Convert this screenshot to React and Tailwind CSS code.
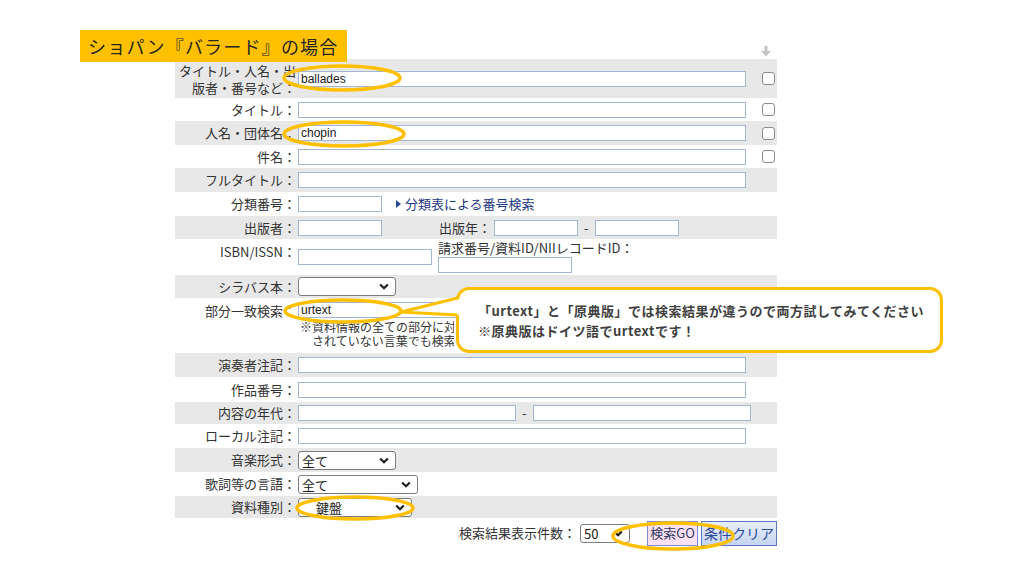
import React from 'react';

const Chevron = () => (
  <svg width="10" height="7" viewBox="0 0 10 7" className="shrink-0">
    <path d="M1.2 1.5 L5 5.2 L8.8 1.5" fill="none" stroke="#1f1f1f" strokeWidth="2.2" />
  </svg>
);

const Field = ({ className = '', value = '' }) => (
  <div
    className={`h-[16px] border border-[#a3b6cf] bg-white pl-[2px] text-[12px] leading-[14px] text-[#1a1a1a] font-['Liberation_Sans',sans-serif] ${className}`}
  >
    {value}
  </div>
);

const Select = ({ className = '', value = '', textClass = '' }) => (
  <div
    className={`h-[19px] border border-[#7c7c7c] rounded-[3px] bg-white flex items-center justify-between pl-[3px] pr-[6px] text-[13px] leading-none text-[#1a1a1a] ${className}`}
  >
    <span className={textClass}>{value}</span>
    <Chevron />
  </div>
);

const Check = () => <div className="w-[13px] h-[13px] border-[1.5px] border-[#8c8c8c] rounded-[3px] bg-white" />;

const Row = ({ gray, h, label, children, check, labelClass = '', align = 'items-center' }) => (
  <div className={`flex ${align} ${h} ${gray ? 'bg-[#e8e8e8]' : ''}`}>
    <div className={`w-[123px] shrink-0 pr-[2px] text-right text-[13px] text-[#333] ${labelClass}`}>{label}</div>
    <div className="flex-1 flex items-center">{children}</div>
    {check !== undefined && (
      <div className="w-[22px] shrink-0 pl-[7px] flex items-center">{check && <Check />}</div>
    )}
  </div>
);

export default function App() {
  return (
    <div className="relative w-[1024px] h-[576px] bg-white overflow-hidden font-['Noto_Sans_CJK_JP','Noto_Sans',sans-serif]">
      <div className="pt-[43px] pl-[175px] w-[777px]">
        <div className="h-[16px] flex justify-end pr-[5px] pt-[3px]">
          <svg width="12" height="11" viewBox="0 0 12 11">
            <path d="M4.5 0 H7.5 V5 H11 L6 10.5 L1 5 H4.5 Z" fill="#c4c4c4" />
          </svg>
        </div>

        <Row gray h="h-[39px]" label="タイトル・人名・出版者・番号など：" labelClass="leading-[17px] pl-[4px]" check>
          <Field className="w-[448px]" value="ballades" />
        </Row>
        <Row h="h-[23px]" label="タイトル：" check>
          <Field className="w-[448px]" />
        </Row>
        <Row gray h="h-[24px]" label="人名・団体名：" check>
          <Field className="w-[448px]" value="chopin" />
        </Row>
        <Row h="h-[23px]" label="件名：" check>
          <Field className="w-[448px]" />
        </Row>
        <Row gray h="h-[24px]" label="フルタイトル：">
          <Field className="w-[448px]" />
        </Row>
        <Row h="h-[24px]" label="分類番号：">
          <Field className="w-[84px]" />
          <span className="ml-[14px] text-[#1f3a85] text-[13px] flex items-center">
            <svg width="5" height="8" viewBox="0 0 5 8" className="mr-[4px]">
              <path d="M0 0 L5 4 L0 8 Z" fill="#2b4a9a" />
            </svg>
            分類表による番号検索
          </span>
        </Row>
        <Row gray h="h-[23px]" label="出版者：">
          <Field className="w-[84px]" />
          <span className="ml-[57px] text-[13px] text-[#333]">出版年：</span>
          <Field className="ml-[3px] w-[84px]" />
          <span className="mx-[6px] text-[13px] text-[#333]">-</span>
          <Field className="w-[84px]" />
        </Row>
        <Row h="h-[36px]" label="ISBN/ISSN：" align="items-start" labelClass="pt-[3px]">
          <div className="flex items-start">
            <Field className="mt-[10px] w-[134px]" />
            <div className="ml-[6px] flex flex-col">
              <span className="text-[13px] leading-[16px] pt-[1px] text-[#333]">請求番号/資料ID/NIIレコードID：</span>
              <Field className="w-[134px] mt-[1px]" />
            </div>
          </div>
        </Row>
        <Row gray h="h-[23px]" label="シラバス本：">
          <Select className="w-[98px]" />
        </Row>
        <Row h="h-[55px]" label="部分一致検索：" align="items-start" labelClass="pt-[3px]">
          <div className="flex flex-col pt-[4px]">
            <Field className="w-[448px]" value="urtext" />
            <div className="mt-[2px] pl-[2px] w-[156px] overflow-hidden whitespace-nowrap text-[12px] leading-[14px] text-[#333]">
              <div>※資料情報の全ての部分に対して検索を行います。</div>
              <div className="pl-[12px]">されていない言葉でも検索できます。</div>
            </div>
          </div>
        </Row>
        <Row gray h="h-[24px]" label="演奏者注記：">
          <Field className="w-[448px]" />
        </Row>
        <Row h="h-[25px]" label="作品番号：">
          <Field className="w-[448px]" />
        </Row>
        <Row gray h="h-[22px]" label="内容の年代：">
          <Field className="w-[218px]" />
          <span className="mx-[6px] text-[13px] text-[#333]">-</span>
          <Field className="w-[218px]" />
        </Row>
        <Row h="h-[24px]" label="ローカル注記：">
          <Field className="w-[448px]" />
        </Row>
        <Row gray h="h-[24px]" label="音楽形式：">
          <Select className="w-[98px]" value="全て" />
        </Row>
        <Row h="h-[24px]" label="歌詞等の言語：">
          <Select className="w-[120px]" value="全て" />
        </Row>
        <Row gray h="h-[22px]" label="資料種別：">
          <Select className="w-[114px]" value="鍵盤" textClass="pl-[14px]" />
        </Row>

        <div className="h-[30px] flex items-center justify-end text-[13px] text-[#333]">
          <span>検索結果表示件数：</span>
          <Select className="ml-[4px] w-[50px]" value="50" />
          <div className="ml-[17px] h-[25px] w-[51px] border border-[#7d8ed6] bg-[#fbe1f1] flex items-center justify-center text-[13px] text-[#333a66]">
            検索GO
          </div>
          <div className="ml-[3px] h-[25px] w-[76px] border border-[#5c76c6] bg-gradient-to-b from-[#e9effb] to-[#c5d4f1] flex items-center justify-center text-[14px] text-[#2c4a9c]">
            条件クリア
          </div>
        </div>
      </div>

      {/* annotation banner */}
      <div className="absolute left-[80px] top-[30px] w-[267px] h-[32px] bg-[#ffc000] flex items-center pl-[8px] text-[18px] tracking-[1.2px] text-[#262626]">
        ショパン『バラード』の場合
      </div>

      {/* speech bubble */}
      <div className="absolute left-[456px] top-[287px] w-[487px] h-[66px] border-[3px] border-[#ffc000] rounded-[13px] bg-white pl-[19px] pt-[11px] text-[13px] leading-[20px] font-bold tracking-[0.5px] text-[#404040] whitespace-nowrap">
        <div>「urtext」と「原典版」では検索結果が違うので両方試してみてください</div>
        <div>※原典版はドイツ語でurtextです！</div>
      </div>

      <svg className="absolute inset-0 pointer-events-none" width="1024" height="576" viewBox="0 0 1024 576">
        <polygon points="460,299 401,312 460,315" fill="#ffffff" />
        <polyline points="457.5,298 401,312 457.5,315" fill="none" stroke="#ffc000" strokeWidth="3" strokeLinejoin="round" />
        <g fill="none" stroke="#ffc000" strokeWidth="3.5">
          <ellipse cx="342" cy="78" rx="58" ry="12" />
          <ellipse cx="344" cy="134" rx="60" ry="12" />
          <ellipse cx="343" cy="311" rx="58" ry="11" />
          <ellipse cx="355" cy="508" rx="58" ry="11" />
          <ellipse cx="673" cy="536" rx="60" ry="13" />
        </g>
      </svg>
    </div>
  );
}
